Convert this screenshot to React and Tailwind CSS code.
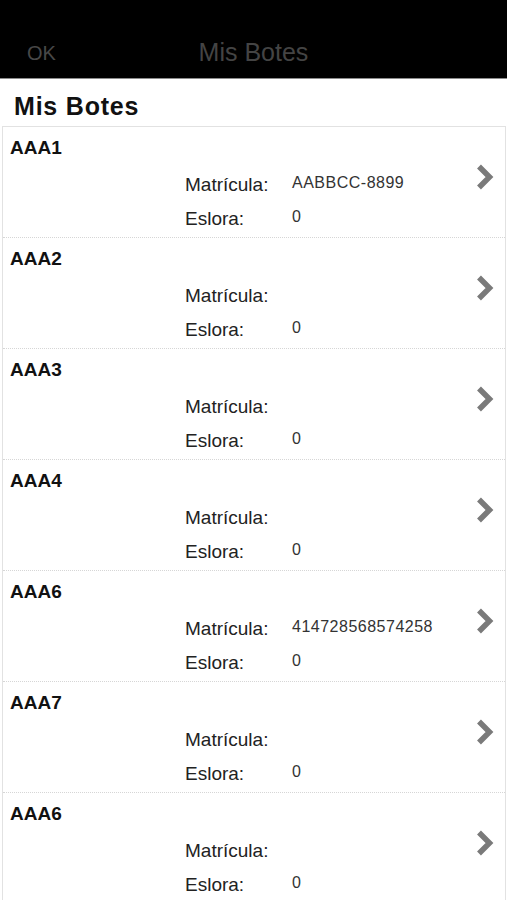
const boats = [
  { name: 'AAA1', matricula: 'AABBCC-8899', eslora: '0' },
  { name: 'AAA2', matricula: '', eslora: '0' },
  { name: 'AAA3', matricula: '', eslora: '0' },
  { name: 'AAA4', matricula: '', eslora: '0' },
  { name: 'AAA6', matricula: '414728568574258', eslora: '0' },
  { name: 'AAA7', matricula: '', eslora: '0' },
  { name: 'AAA6', matricula: '', eslora: '0' },
];

function Chevron() {
  return (
    <svg width="20" height="28" viewBox="0 0 20 28" fill="none">
      <polyline
        points="4,3.5 14.5,14 4,24.5"
        stroke="#7a7a7a"
        strokeWidth="5.5"
        strokeLinejoin="miter"
        strokeLinecap="butt"
      />
    </svg>
  );
}

function BoatRow({ boat }) {
  return (
    <div className="flex h-[111px] border-b border-dotted border-[#d6d6d6]">
      <div className="flex-1 pl-[7px] pt-[10px]">
        <div className="text-[19px] leading-[22px] font-bold text-[#111]">{boat.name}</div>
        {/* details */}
        <div className="pl-[175px] mt-[15px] flex flex-col gap-[12px]">
          <div className="flex items-start h-[22px]">
            <div className="w-[107px] text-[19px] leading-[22px] text-[#222]">Matrícula:</div>
            <div className="text-[16px] leading-[18px] tracking-[0.5px] text-[#333]">{boat.matricula}</div>
          </div>
          <div className="flex items-start h-[22px]">
            <div className="w-[107px] text-[19px] leading-[22px] text-[#222]">Eslora:</div>
            <div className="text-[16px] leading-[18px] tracking-[0.5px] text-[#333]">{boat.eslora}</div>
          </div>
        </div>
      </div>
      <div className="pt-[36px] pr-[10px]">
        <Chevron />
      </div>
    </div>
  );
}

export default function App() {
  return (
    <div className="w-[507px] min-h-[900px] bg-white" style={{ fontFamily: '"Liberation Sans", Arial, sans-serif' }}>
      {/* Top bar */}
      <div className="h-[79px] bg-black border-b border-[#8c8c8c] pt-[27px]">
        <div className="flex items-center h-[52px]">
          <div className="w-[80px] pl-[27px] text-[20px] text-[#484848]">OK</div>
          <div className="flex-1 text-center text-[25px] text-[#444]">Mis Botes</div>
          <div className="w-[80px]"></div>
        </div>
      </div>

      {/* Heading */}
      <div className="mt-[12px] pl-[14px] text-[25px] leading-[30px] font-bold tracking-[0.8px] text-[#111]">
        Mis Botes
      </div>

      {/* List */}
      <div className="mt-[5px] ml-[2px] mr-[1px] border-x border-t border-[#e2e2e2] bg-white">
        {boats.map((b, i) => (
          <BoatRow key={i} boat={b} />
        ))}
      </div>
    </div>
  );
}
